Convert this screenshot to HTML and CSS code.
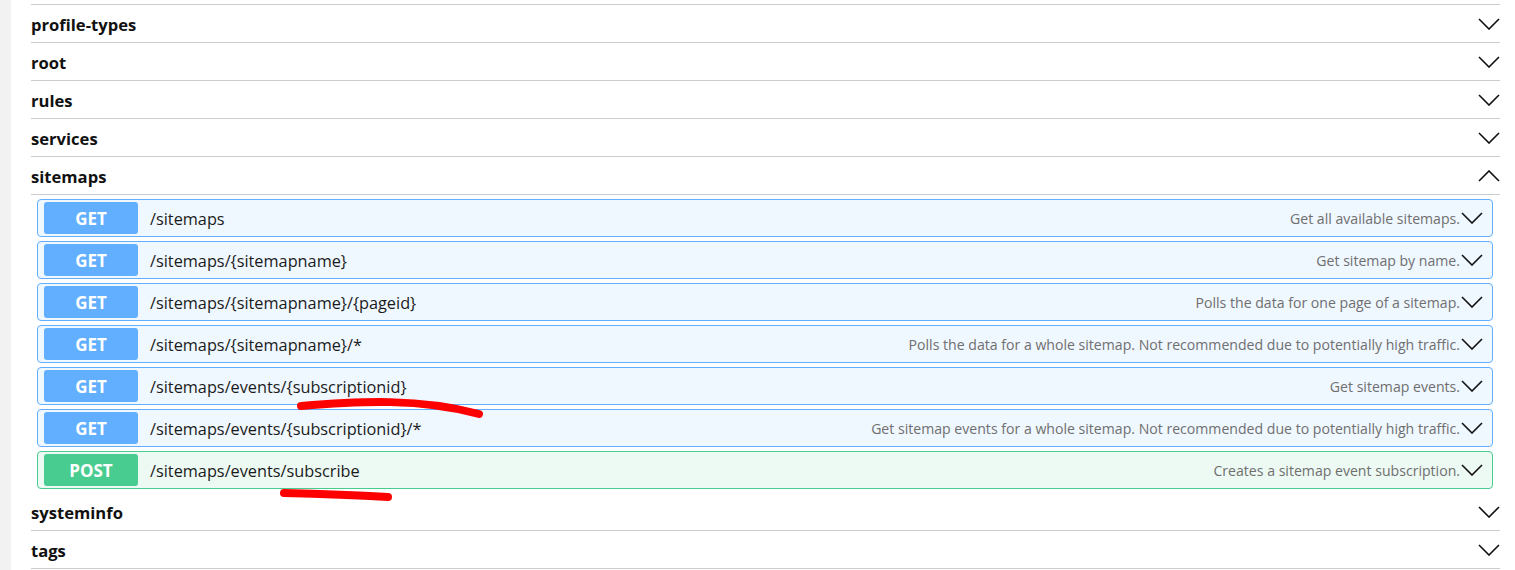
FILE: index.html
```html
<!DOCTYPE html>
<html lang="en">
<head>
    <meta charset="UTF-8">
    <meta name="viewport" content="width=device-width, initial-scale=1.0">
    <title>openHAB REST API</title>
    <link rel="stylesheet" href="styles.css">
</head>
<body>
    <div class="sidebar"></div>
    <div class="main">
        <div class="tag-end"></div>
        <div class="tag"><span>profile-types</span><svg class="arrow" viewBox="0 0 22 12"><path d="M1 1 L11 11 L21 1"/></svg></div>
        <div class="tag"><span>root</span><svg class="arrow" viewBox="0 0 22 12"><path d="M1 1 L11 11 L21 1"/></svg></div>
        <div class="tag"><span>rules</span><svg class="arrow" viewBox="0 0 22 12"><path d="M1 1 L11 11 L21 1"/></svg></div>
        <div class="tag"><span>services</span><svg class="arrow" viewBox="0 0 22 12"><path d="M1 1 L11 11 L21 1"/></svg></div>
        <div class="tag"><span>sitemaps</span><svg class="arrow" viewBox="0 0 22 12"><path d="M1 11 L11 1 L21 11"/></svg></div>
        <div class="ops">
            <div class="op get"><span class="method">GET</span><span class="path">/sitemaps</span><span class="desc">Get all available sitemaps.</span><svg class="op-arrow" viewBox="0 0 22 12"><path d="M1 1 L11 11 L21 1"/></svg></div>
            <div class="op get"><span class="method">GET</span><span class="path">/sitemaps/{sitemapname}</span><span class="desc">Get sitemap by name.</span><svg class="op-arrow" viewBox="0 0 22 12"><path d="M1 1 L11 11 L21 1"/></svg></div>
            <div class="op get"><span class="method">GET</span><span class="path">/sitemaps/{sitemapname}/{pageid}</span><span class="desc">Polls the data for one page of a sitemap.</span><svg class="op-arrow" viewBox="0 0 22 12"><path d="M1 1 L11 11 L21 1"/></svg></div>
            <div class="op get"><span class="method">GET</span><span class="path">/sitemaps/{sitemapname}/*</span><span class="desc">Polls the data for a whole sitemap. Not recommended due to potentially high traffic.</span><svg class="op-arrow" viewBox="0 0 22 12"><path d="M1 1 L11 11 L21 1"/></svg></div>
            <div class="op get"><span class="method">GET</span><span class="path">/sitemaps/events/{subscriptionid}</span><span class="desc">Get sitemap events.</span><svg class="op-arrow" viewBox="0 0 22 12"><path d="M1 1 L11 11 L21 1"/></svg></div>
            <div class="op get"><span class="method">GET</span><span class="path">/sitemaps/events/{subscriptionid}/*</span><span class="desc">Get sitemap events for a whole sitemap. Not recommended due to potentially high traffic.</span><svg class="op-arrow" viewBox="0 0 22 12"><path d="M1 1 L11 11 L21 1"/></svg></div>
            <div class="op post"><span class="method">POST</span><span class="path">/sitemaps/events/subscribe</span><span class="desc">Creates a sitemap event subscription.</span><svg class="op-arrow" viewBox="0 0 22 12"><path d="M1 1 L11 11 L21 1"/></svg></div>
        </div>
        <div class="tag"><span>systeminfo</span><svg class="arrow" viewBox="0 0 22 12"><path d="M1 1 L11 11 L21 1"/></svg></div>
        <div class="tag"><span>tags</span><svg class="arrow" viewBox="0 0 22 12"><path d="M1 1 L11 11 L21 1"/></svg></div>
    </div>
    <svg class="marks" viewBox="0 0 1515 570">
        <path d="M301 406 C 360 401, 420 398, 479 414"/>
        <path d="M284 493 C 320 494, 350 495, 388 497"/>
    </svg>
</body>
</html>
```

FILE: styles.css
```css
body {
    margin: 0;
    display: flex;
    height: 570px;
    overflow: hidden;
    background-color: #fff;
    font-family: "Open Sans", "Noto Sans", sans-serif;
    color: #1b1b1b;
}
.sidebar {
    width: 11px;
    flex-shrink: 0;
    background-color: #f2f2f2;
}
.main {
    flex: 1;
    padding: 0 15px 0 20px;
}
.tag-end {
    height: 4px;
    border-bottom: 1px solid #cccccc;
}
.tag {
    height: 37px;
    display: flex;
    align-items: center;
    justify-content: space-between;
    border-bottom: 1px solid #cccccc;
    font-size: 16.6px;
    font-weight: 700;
    color: #111;
}
.tag span {
    padding-top: 2px;
}
.arrow {
    width: 22px;
    height: 12px;
}
.arrow path,
.op-arrow path {
    fill: none;
    stroke: #111;
    stroke-width: 1.6;
}
.ops {
    display: flex;
    flex-direction: column;
    gap: 4px;
    padding: 4px 7px 4px 6px;
}
.op {
    height: 32px;
    padding: 2px 9px 2px 6px;
    display: flex;
    align-items: center;
    border: 1px solid #61affe;
    border-radius: 4px;
    background-color: #eff7ff;
}
.op.post {
    border-color: #49cc90;
    background-color: #edfaf4;
}
.method {
    width: 94px;
    height: 32px;
    line-height: 33px;
    border-radius: 3px;
    background-color: #61affe;
    color: #fff;
    font-weight: 700;
    font-size: 17px;
    text-align: center;
    flex-shrink: 0;
}
.post .method {
    background-color: #49cc90;
}
.path {
    margin-left: 12px;
    padding-top: 2px;
    font-size: 16.3px;
    color: #1b1b1b;
}
.desc {
    flex: 1;
    padding-top: 1px;
    text-align: right;
    font-size: 14.1px;
    color: #6f6f6f;
}
.op-arrow {
    width: 22px;
    height: 12px;
    margin-left: 1px;
}
.marks {
    position: absolute;
    left: 0;
    top: 0;
    width: 1515px;
    height: 570px;
    pointer-events: none;
}
.marks path {
    fill: none;
    stroke: #ff0000;
    stroke-width: 8;
    stroke-linecap: round;
}
```
